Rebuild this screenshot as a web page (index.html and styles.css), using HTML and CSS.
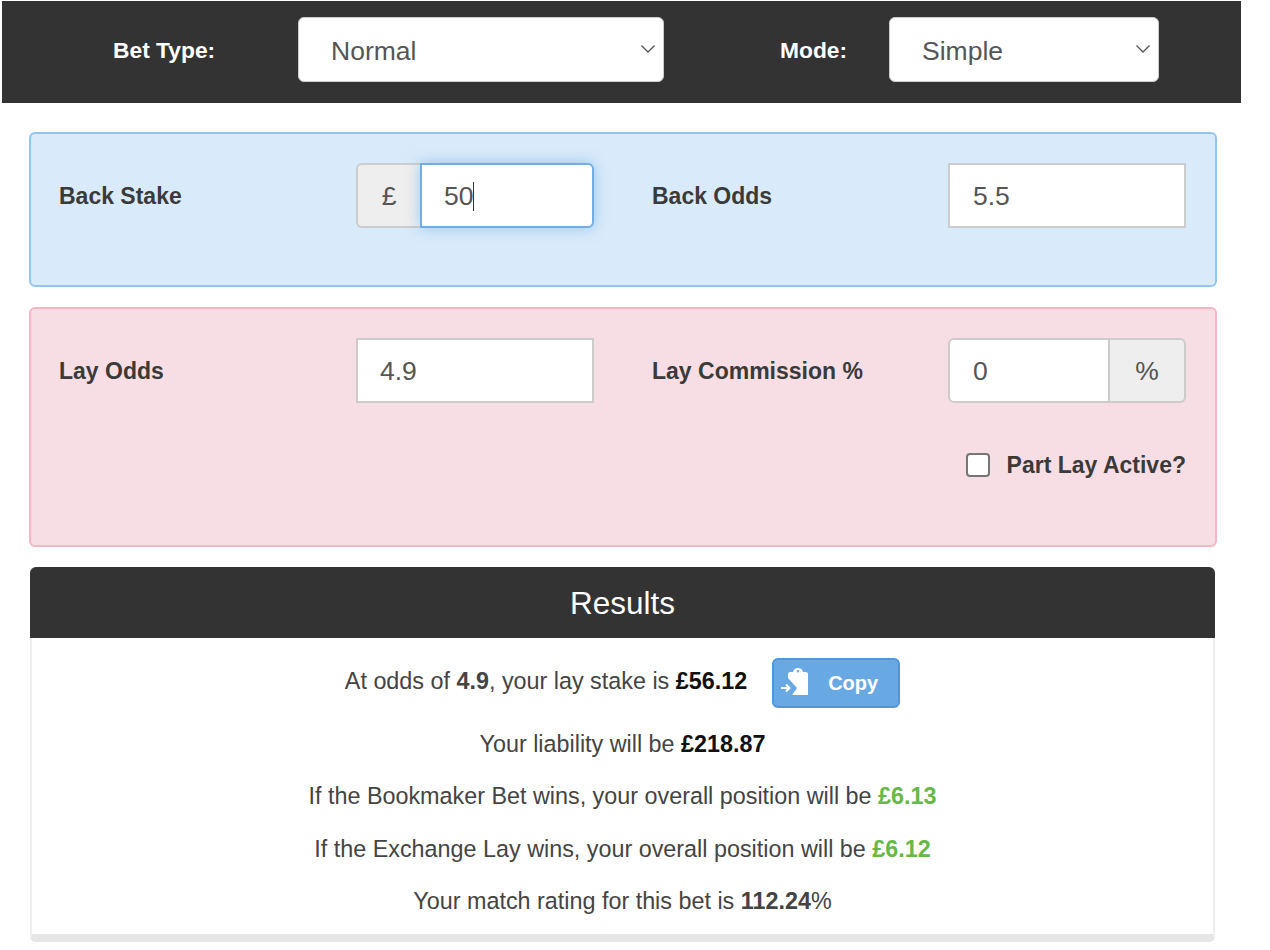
FILE: index.html
```html
<!DOCTYPE html>
<html lang="en">
<head>
    <meta charset="UTF-8">
    <title>Matched Betting Calculator</title>
    <link rel="stylesheet" href="styles.css">
</head>
<body>
    <!-- Bet type and mode -->
    <div class="top-bar">
        <label class="top-label type-label">Bet Type:</label>
        <div class="fake-select type-select">
            <span>Normal</span>
            <svg class="chevron" viewBox="0 0 16 10"><path d="M1.5 1.5 8 8l6.5-6.5"/></svg>
        </div>
        <label class="top-label mode-label">Mode:</label>
        <div class="fake-select mode-select">
            <span>Simple</span>
            <svg class="chevron" viewBox="0 0 16 10"><path d="M1.5 1.5 8 8l6.5-6.5"/></svg>
        </div>
    </div>

    <div class="content">
        <div class="panel panel-back">
            <div class="form-grid">
                <div class="form-pair">
                    <label class="field-label">Back Stake</label>
                    <div class="input-group">
                        <span class="addon addon-left">£</span>
                        <div class="field field-focus"><span>50</span><i class="caret"></i></div>
                    </div>
                </div>
                <div class="form-pair">
                    <label class="field-label">Back Odds</label>
                    <div class="field field-square">5.5</div>
                </div>
            </div>
        </div>

        <div class="panel panel-lay">
            <div class="form-grid">
                <div class="form-pair">
                    <label class="field-label">Lay Odds</label>
                    <div class="field field-square">4.9</div>
                </div>
                <div class="form-pair">
                    <label class="field-label">Lay Commission %</label>
                    <div class="input-group">
                        <div class="field field-left">0</div>
                        <span class="addon addon-right">%</span>
                    </div>
                </div>
            </div>
            <div class="part-lay">
                <span class="checkbox"></span>
                <label class="field-label">Part Lay Active?</label>
            </div>
        </div>

        <!-- Results -->
        <div class="results">
            <h2 class="results-title">Results</h2>
            <div class="results-body">
                <div class="first-line">
                    <span class="first-text">At odds of <b>4.9</b>, your lay stake is <b class="dark">£56.12</b></span>
                    <button class="copy-btn">
                        <svg class="copy-icon" viewBox="0 0 27 28">
                            <path class="copy-board" fill-rule="evenodd" d="M9 4h3c.5-2.500 2.500-4 5-4s4.500 1.500 5 4h3c1 0 2 1 2 2v21H11l5-7-9-10V6c0-1 1-2 2-2zM17 2a1.200 1.200 0 1 0 0 2.400 1.200 1.200 0 0 0 0-2.400z"/>
                            <path class="copy-arrow" d="M0 20h8M5 16.500 8.500 20 5 23.500"/>
                        </svg>
                        <span>Copy</span>
                    </button>
                </div>
                <p>Your liability will be <b class="dark">£218.87</b></p>
                <p>If the Bookmaker Bet wins, your overall position will be <b class="green">£6.13</b></p>
                <p>If the Exchange Lay wins, your overall position will be <b class="green">£6.12</b></p>
                <p>Your match rating for this bet is <b>112.24</b>%</p>
            </div>
        </div>
    </div>
</body>
</html>
```

FILE: styles.css
```css
/* Global Styles */
* {
    box-sizing: border-box;
}

body {
    margin: 0;
    background: #fff;
    color: #444;
    font-family: "Liberation Sans", Arial, sans-serif;
    overflow: hidden;
}

/* Top bar */
.top-bar {
    display: flex;
    align-items: center;
    width: 1239px;
    height: 102px;
    margin: 1px 0 0 2px;
    padding-bottom: 6px;
    background: #333;
}

.top-label {
    margin-top: 2px;
    color: #fff;
    font-size: 22.8px;
    font-weight: bold;
}

.type-label {
    margin-left: 111px;
    width: 185px;
}

.mode-label {
    margin-left: 116px;
    width: 109px;
}

.fake-select {
    display: flex;
    align-items: center;
    justify-content: space-between;
    height: 65px;
    padding: 5px 7px 0 32px;
    background: #fff;
    border: 1px solid #ccc;
    border-radius: 6px;
    color: #555;
    font-size: 26.5px;
}

.type-select {
    width: 366px;
}

.mode-select {
    width: 270px;
}

.chevron {
    width: 16px;
    height: 10px;
    margin-bottom: 5px;
    fill: none;
    stroke: #555;
    stroke-width: 1.3;
}

/* Panels */
.content {
    display: flex;
    flex-direction: column;
    width: 1188px;
    margin: 29px 0 0 29px;
}

.panel {
    padding: 29px 30px 0 28px;
    border: 2px solid;
    border-radius: 6px;
}

.panel-back {
    height: 155px;
    background: #d9eafa;
    border-color: #93c5ef;
}

.panel-lay {
    height: 240px;
    margin-top: 20px;
    background: #f7dee5;
    border-color: #f3b6c4;
}

.form-grid {
    display: grid;
    grid-template-columns: 535px 534px;
    column-gap: 58px;
}

.form-pair {
    display: grid;
    grid-template-columns: 1fr 238px;
    align-items: center;
}

.form-pair:first-child .field {
    padding-left: 22px;
}

.field-label {
    margin-top: 2px;
    color: #3a3a3a;
    font-size: 23px;
    font-weight: bold;
}

.field {
    display: flex;
    align-items: center;
    height: 65px;
    padding: 2px 23px 0;
    background: #fff;
    border: 2px solid #ccc;
    color: #555;
    font-size: 26.5px;
}

.field-square {
    border-radius: 0;
}

.input-group {
    display: flex;
    height: 65px;
}

.addon {
    display: flex;
    align-items: center;
    justify-content: center;
    height: 65px;
    padding-top: 2px;
    background: #eee;
    border: 2px solid #ccc;
    color: #555;
    font-size: 26.5px;
}

.addon-left {
    width: 64px;
    border-right: 0;
    border-radius: 6px 0 0 6px;
}

.addon-right {
    width: 76px;
    border-left: 0;
    border-radius: 0 6px 6px 0;
}

.field-focus {
    flex: 1;
    border-color: #72aee6;
    border-radius: 0 6px 6px 0;
    box-shadow: 0 0 14px rgba(102, 175, 233, 0.6);
}

.field-left {
    flex: 1;
    border-radius: 6px 0 0 6px;
}

.caret {
    width: 1px;
    height: 29px;
    background: #333;
}

.part-lay {
    display: flex;
    align-items: center;
    justify-content: flex-end;
    gap: 17px;
    margin: 47px -1px 0 0;
}

.checkbox {
    width: 24px;
    height: 24px;
    background: #fff;
    border: 2px solid #767676;
    border-radius: 4px;
}

/* Results */
.results {
    height: 375px;
    margin: 20px 2px 0 1px;
    background: #fff;
    border: 2px solid #eee;
    border-bottom: 8px solid #e5e5e5;
    border-top: 0;
    border-radius: 6px;
}

.results-title {
    margin: 0 -2px;
    padding: 0;
    height: 71px;
    line-height: 73px;
    background: #333;
    border-radius: 6px 6px 0 0;
    color: #fff;
    font-size: 31.5px;
    font-weight: normal;
    text-align: center;
}

.results-body {
    padding-top: 20px;
    font-size: 23.35px;
    text-align: center;
}

.results-body p {
    margin: 0 0 26.500px;
    line-height: 26px;
}

.first-line {
    display: flex;
    align-items: center;
    justify-content: center;
    gap: 25px;
    height: 50px;
    margin-bottom: 22.500px;
}

.first-text {
    margin-bottom: 4px;
}

.dark {
    color: #111;
}

.green {
    color: #66b949;
}

.copy-btn {
    display: flex;
    align-items: center;
    gap: 20px;
    width: 128px;
    height: 50px;
    padding: 0 0 0 7px;
    background: #69a9e3;
    border: 2px solid #4e97e0;
    border-radius: 6px;
    color: #fff;
    font-family: inherit;
    font-size: 20px;
    font-weight: bold;
}

.copy-icon {
    width: 27px;
    height: 28px;
    margin-bottom: 2px;
}

.copy-board {
    fill: #fff;
}

.copy-arrow {
    fill: none;
    stroke: #fff;
    stroke-width: 2;
}
```
